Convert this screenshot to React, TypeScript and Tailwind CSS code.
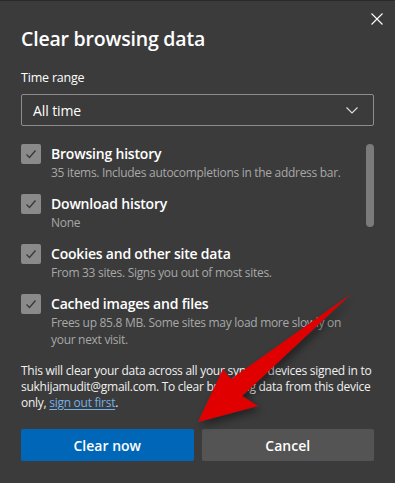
import React from "react";

const items = [
  { title: "Browsing history", desc: ["35 items. Includes autocompletions in the address bar."] },
  { title: "Download history", desc: ["None"] },
  { title: "Cookies and other site data", desc: ["From 33 sites. Signs you out of most sites."] },
  { title: "Cached images and files", desc: ["Frees up 85.8 MB. Some sites may load more slowly on", "your next visit."] },
];

function Check() {
  return (
    <div className="w-5 h-5 rounded-[2px] bg-[#8a8a8a] flex items-center justify-center shrink-0">
      <svg width="14" height="14" viewBox="0 0 14 14" fill="none">
        <path d="M2.5 7.5 L5.5 10.5 L11.5 3.5" stroke="#3a3a3a" strokeWidth="1.4" />
      </svg>
    </div>
  );
}

export default function App() {
  return (
    <div
      className="relative w-[395px] h-[483px] overflow-hidden bg-[#3b3b3b] border-t border-[#2a2a2a] text-white"
      style={{ fontFamily: '"Open Sans", "Noto Sans", sans-serif' }}
    >
      <div className="flex justify-end pt-[12px] pr-[12px]">
        <svg width="12" height="12" viewBox="0 0 12 12">
          <path d="M0.5 0.5 L11.5 11.5 M11.5 0.5 L0.5 11.5" stroke="#ffffff" strokeWidth="1.1" />
        </svg>
      </div>
      <div className="px-[21px]">
        <h1 className="text-[19.5px] leading-[26px] font-semibold mt-[1px] tracking-[-0.2px]">Clear browsing data</h1>
        <div className="text-[12.5px] leading-[18px] mt-[17px] tracking-[-0.2px]">Time range</div>
        <div className="mt-[7px] h-[32px] border border-[#8d8d8d] rounded-[2px] flex items-center justify-between pl-[11px] pr-[15px]">
          <span className="text-[14px] tracking-[-0.1px]">All time</span>
          <svg width="12" height="7" viewBox="0 0 12 7" fill="none">
            <path d="M0.5 0.5 L6 6 L11.5 0.5" stroke="#e0e0e0" strokeWidth="1.1" />
          </svg>
        </div>
        <div className="flex mt-[18px]">
          <div className="flex-1 flex flex-col gap-[13px]">
            {items.map((it) => (
              <div key={it.title} className="flex gap-[10px]">
                <Check />
                <div className="flex flex-col">
                  <div className="text-[14px] leading-[20px] font-semibold tracking-[-0.2px]">{it.title}</div>
                  <div className="text-[12px] leading-[17px] text-[#a8a8a8] whitespace-nowrap tracking-[-0.3px]">
                    {it.desc.map((d, i) => (
                      <div key={i}>{d}</div>
                    ))}
                  </div>
                </div>
              </div>
            ))}
          </div>
          <div className="w-[8px] h-[83px] rounded-full bg-[#7b7b7b]" />
        </div>
        <div className="mt-[15px] text-[12px] leading-[16px] text-[#f0f0f0] whitespace-nowrap tracking-[-0.27px]">
          <div>This will clear your data across all your synced devices signed in to</div>
          <div>sukhijamudit@gmail.com. To clear browsing data from this device</div>
          <div>
            only, <span className="text-[#74b1e6] underline underline-offset-2">sign out first</span>.
          </div>
        </div>
        <div className="flex gap-[8px] mt-[18px]">
          <button className="flex-1 h-[32px] rounded-[2px] bg-[#0067b8] text-[14px] font-semibold">Clear now</button>
          <button className="flex-1 h-[32px] rounded-[2px] bg-[#545454] text-[14px] font-semibold">Cancel</button>
        </div>
      </div>
      <svg className="absolute left-0 top-0 pointer-events-none" width="395" height="483" viewBox="0 0 395 483">
        <defs>
          <filter id="sh" x="-20%" y="-20%" width="150%" height="150%">
            <feDropShadow dx="3" dy="4" stdDeviation="4" floodColor="#000000" floodOpacity="0.45" />
          </filter>
        </defs>
        <path d="M351 293 L231 378 L223 368 L198 421 L258 405 L242 395 Z" fill="#e00000" filter="url(#sh)" />
      </svg>
    </div>
  );
}
